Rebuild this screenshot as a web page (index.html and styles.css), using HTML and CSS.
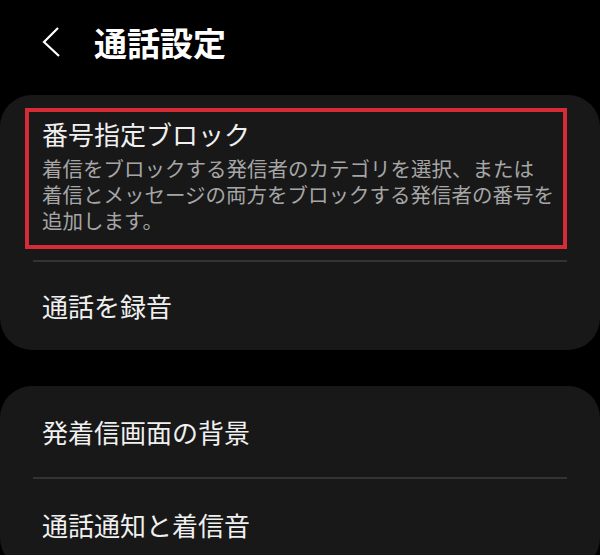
FILE: index.html
```html
<!DOCTYPE html>
<html lang="ja">
<head>
    <meta charset="UTF-8" />
    <meta name="viewport" content="width=device-width, initial-scale=1.0">
    <title>通話設定</title>
    <link rel="stylesheet" href="styles.css">
</head>
<body>
    <div class="header">
        <svg class="back" width="22" height="32" viewBox="0 0 22 32">
            <polyline points="18,2 4,16 19,30" fill="none" stroke="#ffffff" stroke-width="2.2" stroke-linejoin="miter" />
        </svg>
        <h1 class="title">通話設定</h1>
    </div>

    <div class="card">
        <div class="item item-detail highlight">
            <div class="item-title">番号指定ブロック</div>
            <div class="item-desc">着信をブロックする発信者のカテゴリを選択、または<br>着信とメッセージの両方をブロックする発信者の番号を<br>追加します。</div>
        </div>
        <div class="divider"></div>
        <div class="item item-short">
            <div class="item-title">通話を録音</div>
        </div>
    </div>

    <div class="card">
        <div class="item">
            <div class="item-title">発着信画面の背景</div>
        </div>
        <div class="divider"></div>
        <div class="item">
            <div class="item-title">通話通知と着信音</div>
        </div>
    </div>
</body>
</html>
```

FILE: styles.css
```css
body {
    margin: 0;
    padding: 0;
    background-color: #000;
    color: #f2f2f2;
    font-family: 'Noto Sans CJK JP', 'Noto Sans', sans-serif;
    overflow: hidden;
}

.header {
    display: flex;
    align-items: center;
    height: 84px;
    padding-left: 40px;
    margin-bottom: 11px;
}

.back {
    display: block;
}

.title {
    margin: 0 0 0 32px;
    font-size: 33px;
    font-weight: bold;
    color: #fff;
    line-height: 1;
}

.card {
    display: flow-root;
    background-color: #181818;
    border-radius: 32px;
    padding: 0 33px;
    margin-bottom: 36px;
}

.item {
    display: flex;
    flex-direction: column;
    justify-content: center;
    height: 91px;
    padding-left: 9px;
}

.item-title {
    font-size: 26px;
    line-height: 34px;
    color: #f0f0f0;
}

.item-detail {
    height: auto;
}

/* 红框标注 */
.highlight {
    margin: 13px 0 0 -8px;
    padding: 5px 0 12px 13px;
    border: 4px solid #d42b36;
}

.item-desc {
    margin-top: 4px;
    font-size: 20.5px;
    line-height: 26px;
    color: #a6a6a6;
    white-space: nowrap;
}

.item-short {
    height: 88px;
}

.divider {
    height: 2px;
    background-color: #333;
}

.highlight + .divider {
    margin-top: 11px;
}
```
